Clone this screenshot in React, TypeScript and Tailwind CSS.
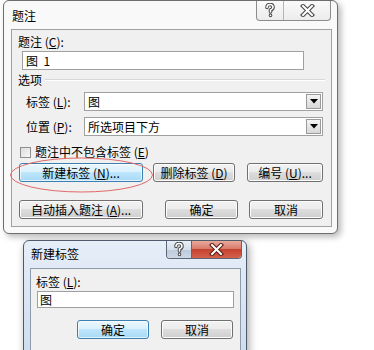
import React from "react";

function HelpGlyph() {
  return (
    <svg width="14" height="15" viewBox="0 0 14 15">
      <g fill="none" strokeLinecap="round" strokeLinejoin="round">
        <path d="M4 4.5 Q4 1.5 7 1.5 Q10 1.5 10 4.2 Q10 6 7.5 7 L7.5 9" stroke="#4a4a4a" strokeWidth="3.6" />
        <path d="M4 4.5 Q4 1.5 7 1.5 Q10 1.5 10 4.2 Q10 6 7.5 7 L7.5 9" stroke="#ffffff" strokeWidth="1.6" />
        <path d="M7.5 12.3 L7.5 12.4" stroke="#4a4a4a" strokeWidth="3.6" />
        <path d="M7.5 12.3 L7.5 12.4" stroke="#ffffff" strokeWidth="1.6" />
      </g>
    </svg>
  );
}

function CloseGlyph({ dark = "#4a4a4a" }: { dark?: string }) {
  return (
    <svg width="15" height="13" viewBox="0 0 15 13">
      <g fill="none" strokeLinecap="square">
        <path d="M3 2 L12 11 M12 2 L3 11" stroke={dark} strokeWidth="4.2" />
        <path d="M3 2 L12 11 M12 2 L3 11" stroke="#ffffff" strokeWidth="2" />
      </g>
    </svg>
  );
}

function Btn({ children, className, focus }: { children: React.ReactNode; className: string; focus?: boolean }) {
  return (
    <div
      className={
        "h-[19px] rounded-[3px] border flex items-center justify-center text-[12px] leading-[14px] text-black " +
        (focus
          ? "border-[#3c7fb1] bg-[linear-gradient(#eaf6fd_0%,#d9f0fc_50%,#bee6fd_50%,#a7d9f5_100%)] shadow-[inset_0_0_0_1px_#ffffffaa] "
          : "border-[#707070] bg-[linear-gradient(#f2f2f2_0%,#ebebeb_50%,#dddddd_50%,#cfcfcf_100%)] shadow-[inset_0_0_0_1px_#fcfcfc] ") +
        className
      }
    >
      {children}
    </div>
  );
}

function Select({ value }: { value: string }) {
  return (
    <div className="flex h-[19px] w-[239px] border border-[#a0a0a0] bg-white">
      <span className="flex-1 pl-[3px] text-[12px] leading-[17px]">{value}</span>
      <div className="m-[1px] flex w-[15px] items-center justify-center border border-[#9a9a9a] bg-[linear-gradient(#f4f4f4,#d8d8d8)]">
        <svg width="8" height="5" viewBox="0 0 8 5">
          <path d="M0 0 L8 0 L4 4.5 Z" fill="#000" />
        </svg>
      </div>
    </div>
  );
}

export default function App() {
  return (
    <div className="relative h-[350px] w-[374px] overflow-hidden bg-white font-['Noto_Sans_CJK_SC','Noto_Sans',sans-serif] text-[12px] text-black">
      {/* main dialog */}
      <div className="absolute left-[3px] top-0 flex w-[335px] flex-col rounded-[6px] border border-[#6e6e6e] bg-[#f9f9f9] pb-[6px] shadow-[3px_3px_6px_rgba(0,0,0,0.28)]">
        <div className="flex h-[28px]">
          <span className="pl-[8px] pt-[8px] text-[12px] leading-[14px]">题注</span>
          <div className="ml-auto mr-[6px] flex h-[20px] overflow-hidden rounded-b-[4px] border border-t-0 border-[#8c8c8c] bg-[linear-gradient(#fafafa,#ececec)]">
            <div className="flex w-[27px] items-center justify-center border-r border-[#b5b5b5]">
              <HelpGlyph />
            </div>
            <div className="flex w-[46px] items-center justify-center">
              <CloseGlyph />
            </div>
          </div>
        </div>
        <div className="ml-[7px] mr-[5px] flex flex-col border border-[#a0a0a0] bg-[#f0f0f0] pb-[7px]">
          <div className="mt-[5px] h-[14px] pl-[6px] leading-[14px]">
            题注 (<u>C</u>):
          </div>
          <div className="ml-[10px] mt-[2px] h-[19px] w-[282px] border border-[#a0a0a0] bg-white pl-[3px] leading-[17px]">
            图 &nbsp;1
          </div>
          <div className="mt-[3px] flex h-[14px] items-center pl-[6px]">
            <span className="leading-[14px]">选项</span>
            <div className="ml-[3px] mr-[6px] h-[2px] flex-1 border-t border-b border-t-[#d8d8d8] border-b-white" />
          </div>
          <div className="mt-[5px] flex h-[19px] items-center">
            <span className="w-[72px] pl-[14px] leading-[14px]">
              标签 (<u>L</u>):
            </span>
            <Select value="图" />
          </div>
          <div className="mt-[6px] flex h-[19px] items-center">
            <span className="w-[72px] pl-[14px] leading-[14px]">
              位置 (<u>P</u>):
            </span>
            <Select value="所选项目下方" />
          </div>
          <div className="mt-[10px] flex h-[12px] items-center pl-[8px]">
            <div className="h-[11px] w-[11px] border border-[#8e8f8f] bg-[linear-gradient(135deg,#dcdcdc,#f8f8f8)]" />
            <span className="ml-[4px] leading-[14px]">
              题注中不包含标签 (<u>E</u>)
            </span>
          </div>
          <div className="mt-[5px] flex pl-[7px]">
            <Btn className="w-[124px]" focus>
              新建标签 (<u>N</u>)...
            </Btn>
            <Btn className="ml-[10px] w-[82px]">
              删除标签 (<u>D</u>)
            </Btn>
            <Btn className="ml-[12px] w-[76px]">
              编号 (<u>U</u>)...
            </Btn>
          </div>
          <div className="mt-[18px] flex pl-[7px]">
            <Btn className="w-[124px]">
              自动插入题注 (<u>A</u>)...
            </Btn>
            <Btn className="ml-[22px] w-[73px]">确定</Btn>
            <Btn className="ml-[11px] w-[74px]">取消</Btn>
          </div>
        </div>
      </div>

      {/* red highlight ellipse */}
      <svg className="absolute left-[8px] top-[156px]" width="148" height="38" viewBox="0 0 148 38">
        <ellipse cx="73.5" cy="19" rx="71" ry="17" fill="none" stroke="#e06868" strokeWidth="1" />
      </svg>

      {/* new label dialog */}
      <div className="absolute left-[23px] top-[240px] flex h-[120px] w-[224px] flex-col rounded-t-[6px] border border-[#4f5b6a] bg-[linear-gradient(180deg,#e6eef8,#cddcee)] shadow-[2px_3px_8px_rgba(0,0,0,0.35)]">
        <div className="flex h-[27px]">
          <span className="pl-[7px] pt-[6px] text-[12px] leading-[14px]">新建标签</span>
          <div className="ml-auto mr-[4px] flex h-[18px] overflow-hidden rounded-b-[4px] border border-t-0 border-[#5b6677]">
            <div className="flex w-[25px] items-center justify-center border-r border-[#5b6677] bg-[linear-gradient(#e9eef5_0%,#d6dfea_50%,#bcc9da_50%,#cdd8e6_100%)]">
              <HelpGlyph />
            </div>
            <div className="flex w-[49px] items-center justify-center bg-[linear-gradient(#e9a99c_0%,#d87b6a_45%,#c4432f_50%,#d4614c_100%)]">
              <CloseGlyph dark="#5a1f16" />
            </div>
          </div>
        </div>
        <div className="ml-[6px] mr-[5px] flex flex-1 flex-col border border-[#8e9bab] bg-[#f0f0f0]">
          <div className="mt-[6px] h-[14px] pl-[5px] leading-[14px]">
            标签 (<u>L</u>):
          </div>
          <div className="ml-[6px] mt-[2px] h-[17px] w-[197px] border border-[#a0a0a0] bg-white pl-[2px] leading-[15px]">
            图
          </div>
          <div className="mt-[12px] flex pl-[46px]">
            <Btn className="w-[72px]" focus>
              确定
            </Btn>
            <Btn className="ml-[12px] w-[72px]">取消</Btn>
          </div>
        </div>
      </div>
    </div>
  );
}
